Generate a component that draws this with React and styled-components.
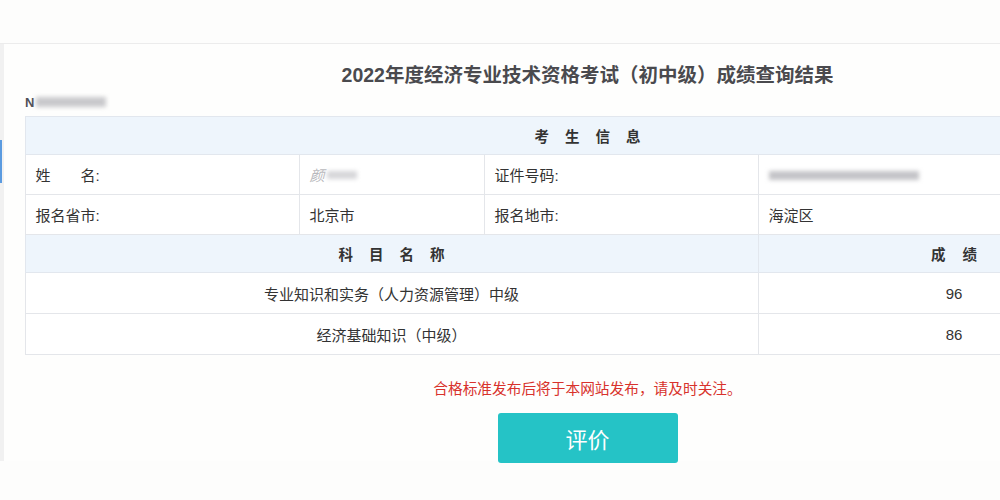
import React from "react";
import styled, { createGlobalStyle } from "styled-components";

const GlobalStyle = createGlobalStyle`
  html, body {
    margin: 0;
    padding: 0;
    background: #fdfdfc;
    overflow: hidden;
  }
  body {
    font-family: "Liberation Sans", "Noto Sans CJK SC", sans-serif;
    color: #333;
  }
`;

const Page = styled.div`
  width: 1000px;
  height: 500px;
  padding-top: 43px;
  box-sizing: border-box;
`;

const Frame = styled.div`
  display: flex;
  height: 417px;
  border-top: 1px solid #ececec;
  background: #fefefd;
`;

const Rail = styled.div`
  flex: 0 0 4px;
  background: #f1f1f1;
  display: flex;
  flex-direction: column;
`;

const RailMark = styled.div`
  width: 2px;
  height: 43px;
  margin-top: 96px;
  background: #5b9be0;
`;

const Content = styled.div`
  flex: 0 0 1146px;
  padding-left: 21px;
  box-sizing: border-box;
  display: flex;
  flex-direction: column;
  align-items: flex-start;
`;

const Inner = styled.div`
  width: 1125px;
  display: flex;
  flex-direction: column;
  align-items: center;
`;

const Title = styled.h1`
  margin: 19px 0 0;
  font-size: 19.5px;
  line-height: 24px;
  font-weight: 700;
  color: #4a4a4e;
`;

const Ticket = styled.div`
  align-self: flex-start;
  margin-top: 7px;
  height: 16px;
  display: flex;
  align-items: center;
  font-size: 13px;
  font-weight: 700;
  color: #505058;
`;

const Blur = styled.span`
  display: inline-block;
  width: ${(p) => p.$w}px;
  height: ${(p) => p.$h}px;
  background: ${(p) => p.$c || "#c9c9cc"};
  filter: blur(2px);
  margin-left: ${(p) => p.$ml || 0}px;
`;

const Table = styled.table`
  margin-top: 6px;
  width: 1125px;
  border-collapse: collapse;
  table-layout: fixed;
  font-size: 15px;
  color: #333;
`;

const HeadCell = styled.td`
  height: 37px;
  padding: 0;
  background: #eef5fc;
  border: 1px solid #e2e7ee;
  text-align: center;
  font-weight: 700;
  font-size: 14.5px;
  color: #333;
  letter-spacing: ${(p) => p.$ls || 16}px;
  text-indent: ${(p) => p.$ls || 16}px;
`;

const Cell = styled.td`
  height: ${(p) => p.$h || 39}px;
  padding: 0 10px;
  border: 1px solid #e4e6ea;
  background: #fff;
  text-align: ${(p) => (p.$center ? "center" : "left")};
  white-space: nowrap;
  overflow: hidden;
`;

const Label = styled.span`
  margin-left: ${(p) => p.$ml || 0}px;
`;

const NameValue = styled.span`
  display: inline-flex;
  align-items: center;
  color: #b8b8bc;
  font-style: italic;
`;

const Notice = styled.p`
  margin: 24px 0 0;
  font-size: 14.7px;
  line-height: 20px;
  color: #d8322c;
`;

const RateButton = styled.button`
  margin-top: 14px;
  width: 180px;
  height: 50px;
  border: none;
  border-radius: 3px;
  background: #25c3c6;
  color: #fff;
  font-family: "Noto Sans CJK SC", sans-serif;
  font-size: 22px;
  cursor: pointer;
`;

const subjects = [
  { name: "专业知识和实务（人力资源管理）中级", score: 96 },
  { name: "经济基础知识（中级）", score: 86 },
];

export default function App() {
  return (
    <>
      <GlobalStyle />
      <Page>
        <Frame>
          <Rail>
            <RailMark />
          </Rail>
          <Content>
            <Inner>
              <Title>2022年度经济专业技术资格考试（初中级）成绩查询结果</Title>
              <Ticket>
                N<Blur $w={70} $h={10} $ml={2} />
              </Ticket>
              <Table>
                <colgroup>
                  <col style={{ width: 274 }} />
                  <col style={{ width: 185 }} />
                  <col style={{ width: 274 }} />
                  <col style={{ width: 392 }} />
                </colgroup>
                <tbody>
                  <tr>
                    <HeadCell colSpan={4}>考生信息</HeadCell>
                  </tr>
                  <tr>
                    <Cell>
                      <Label>姓</Label>
                      <Label $ml={30}>名:</Label>
                    </Cell>
                    <Cell>
                      <NameValue>
                        颜<Blur $w={30} $h={8} $c="#d6d6d9" $ml={2} />
                      </NameValue>
                    </Cell>
                    <Cell>证件号码:</Cell>
                    <Cell>
                      <Blur $w={150} $h={9} $c="#c4c4c8" />
                    </Cell>
                  </tr>
                  <tr>
                    <Cell>报名省市:</Cell>
                    <Cell>北京市</Cell>
                    <Cell>报名地市:</Cell>
                    <Cell>海淀区</Cell>
                  </tr>
                  <tr>
                    <HeadCell colSpan={3}>科目名称</HeadCell>
                    <HeadCell $ls={17}>成绩</HeadCell>
                  </tr>
                  {subjects.map((s) => (
                    <tr key={s.name}>
                      <Cell colSpan={3} $center $h={40}>
                        {s.name}
                      </Cell>
                      <Cell $center $h={39}>
                        {s.score}
                      </Cell>
                    </tr>
                  ))}
                </tbody>
              </Table>
              <Notice>合格标准发布后将于本网站发布，请及时关注。</Notice>
              <RateButton>评价</RateButton>
            </Inner>
          </Content>
        </Frame>
      </Page>
    </>
  );
}
